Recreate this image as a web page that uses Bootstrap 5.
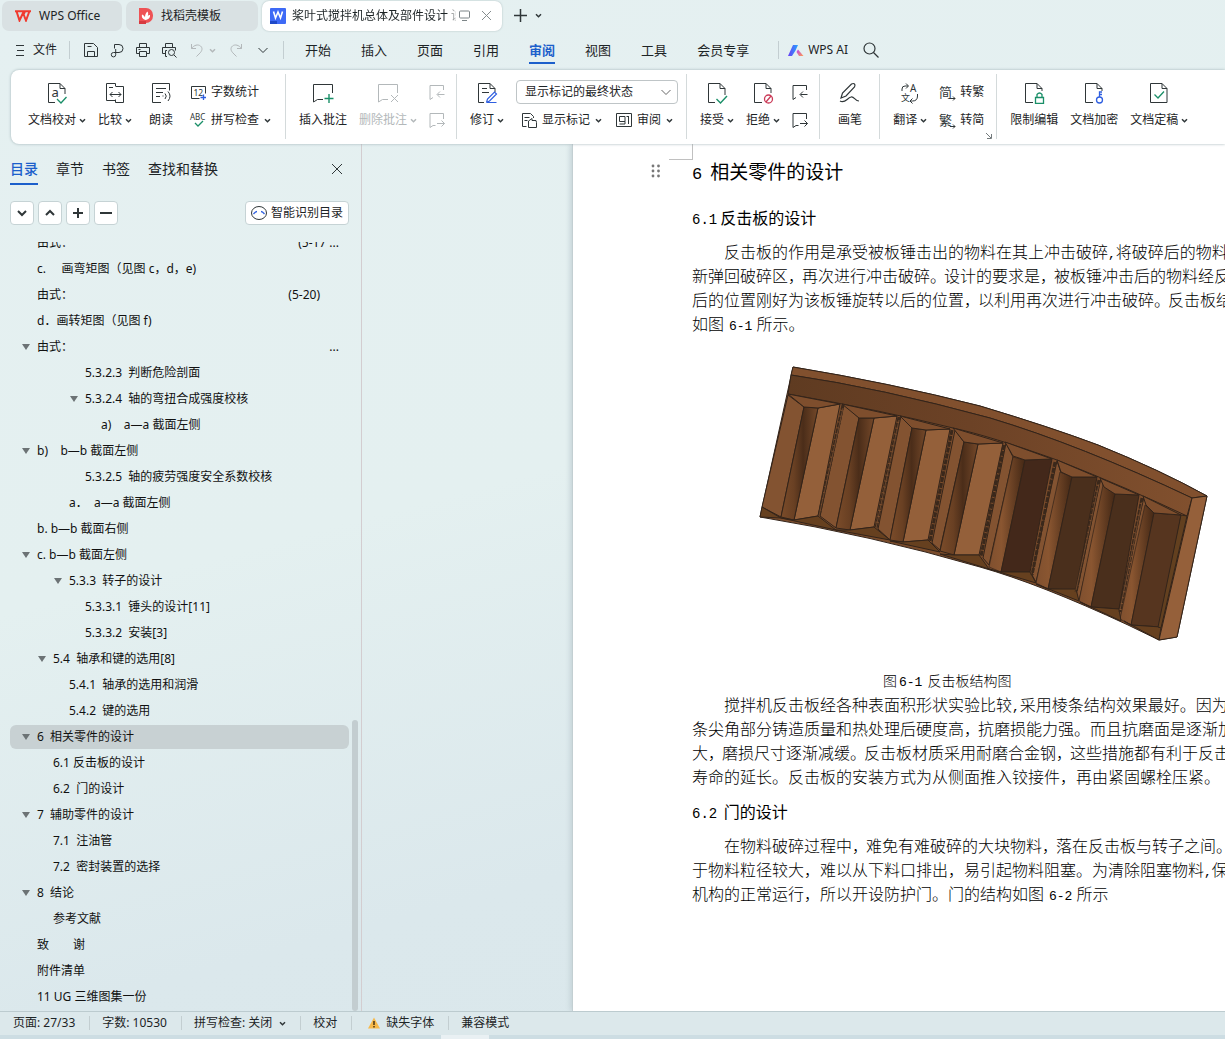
<!DOCTYPE html>
<html lang="zh-CN">
<head>
<meta charset="utf-8">
<meta name="viewport" content="width=device-width, initial-scale=1">
<title>WPS Office</title>
<link href="https://cdn.jsdelivr.net/npm/bootstrap@5.3.0/dist/css/bootstrap.min.css" rel="stylesheet">
<script src="https://cdn.jsdelivr.net/npm/bootstrap@5.3.0/dist/js/bootstrap.bundle.min.js"></script>
<style>
body{font:12px/18px "Noto Sans","Noto Sans CJK SC",sans-serif;color:#1d2426;background:linear-gradient(165deg,#e5f0f1 0%,#e4f0f0 45%,#dbe8ec 75%,#dae7eb 100%);white-space:nowrap}
button{border:0;background:none;padding:0;color:inherit;font:inherit}
a{color:inherit;text-decoration:none}
svg{flex:none;fill:none;stroke:#2f3638;stroke-width:1}
svg text{stroke:none;fill:#2f3638}
.g{stroke:#1a8f68}.b{stroke:#2f5fe0}
.i16{width:16px;height:16px}.i22{width:22px;height:22px}.cv{width:7px;height:7px;stroke-width:1.5}
.off{color:#b3b8ba}.off svg,svg.off{stroke:#b3b8ba}
/* window tabs */
.wtabs{height:33px;padding:0 2px 2px}
.wtab{height:30px;border-radius:7px;background:#d9e1e3}
.t1{width:120px;padding-left:13px}.t2{width:132px;padding-left:13px}.t3{width:240px;padding:0 10px 0 8px}
.wtab.on{background:#fff;box-shadow:0 0 2px #a9b9bc}
.wtitle{width:164px;margin:0 3px 0 6px;-webkit-mask-image:linear-gradient(90deg,#000 156px,transparent 166px)}
/* menu row */
.menu{height:37px;padding:0 15px 3px}
.vr1{width:1px;height:18px;background:#c3ced1}
.mtabs{gap:30px;font-size:13px}
.mtab{height:28px;line-height:28px;border-bottom:2px solid transparent}
.mtab.on{color:#1c5fcb;font-weight:700;border-color:#1c5fcb}
/* ribbon */
.ribbon{margin-left:11px;height:74px;background:#fff;border-radius:8px 0 0 8px;box-shadow:0 0 3px #9fb1b5;padding:4px 0 5px 4px;position:relative;z-index:2}
.grp{gap:12px;padding:8px 12px 0 13px;border-right:1px solid #d4dadb}
.tight{padding-right:11px}.wide{padding-right:14px}
.big{display:flex;flex-direction:column;align-items:center;gap:7px;min-width:34px;height:48px}
.lbl{display:flex;align-items:center;gap:3px}
.col2{display:flex;flex-direction:column;gap:10px;align-items:flex-start;padding-top:1px}
.sm{display:flex;align-items:center;gap:5px;height:18px}
.combo{width:162px;height:24px;font-size:12px;line-height:18px;padding:2px 24px 2px 8px;border-color:#bfc5c7;color:#1d2426;border-radius:4px;margin-top:-3px;background-image:url("data:image/svg+xml,%3csvg xmlns='http://www.w3.org/2000/svg' viewBox='0 0 10 10' fill='none' stroke='%23666'%3e%3cpath d='m.5 3 4.500 4.500L9.500 3'/%3e%3c/svg%3e");background-position:right 6px center;background-size:10px}
/* navigation pane */
.pane{width:362px;border-right:1px solid #d3cdd0}
.ptabs{height:49px;padding:2px 18px 0 10px;gap:18px;font-size:14px}
.ptabs button{height:30px;border-bottom:2px solid transparent}
.ptabs .on{color:#1c5fcb;font-weight:500;border-color:#1c5fcb}
.ptool{padding:8px 12px 0 10px;gap:4px;height:49px}
.sq{width:24px;height:24px;background:#fff;border:1px solid #c6d3d5;border-radius:4px;display:flex;align-items:center;justify-content:center}
.sq svg{stroke-width:2}
.smart{height:24px;background:#fff;border:1px solid #c6d3d5;border-radius:4px;padding:0 5px 0 4px;display:flex;align-items:center;gap:3px}
.tree{padding:0 12px 0 10px;margin:-12px 0 0;list-style:none;font-size:12px;color:#111;display:flex;flex-direction:column}
.tree li{margin:1px 0;height:24px;line-height:24px;border-radius:6px;display:flex;padding:0 10px 0 27px;white-space:pre;position:relative}
.tree li.n2{padding-left:43px}.tree li.n3{padding-left:59px}.tree li.n4{padding-left:75px}.tree li.n5{padding-left:91px}
.tree li.cur{background:#c8d1d3}
.tree .op::before{content:"";border:4px solid transparent;border-top:6px solid #6c7375;border-bottom:0;position:absolute;margin:9px 0 0 -15px}
.eqn{margin-right:19px}
.thumb{width:6px;height:291px;right:3px;bottom:0;border-radius:3px;background:#c3cdd0}
/* document */
.gut{width:210px}
.sheet{background:#fff;border-left:1px solid #c3cfd2;box-shadow:-2px 0 5px #c5d3d7;padding:15px 0 0 119px;position:relative;color:#000;font-family:"Noto Sans CJK SC",sans-serif}
.corner{position:absolute;left:96px;top:0;width:24px;height:16px;border:1px solid #c0c0c0;border-width:0 1px 1px 0}
.grip{position:absolute;left:78px;top:19px;width:10px;height:16px;fill:#777;stroke:none}
.sheet h1{font-size:19px;line-height:24px;margin:0 0 22px;font-weight:400}
.sheet h2{font-size:16px;line-height:24px;margin:11px 0 10px;font-weight:400}
.sheet p{font-size:16px;line-height:24px;margin:0;font-weight:300}
.sheet p.ind{text-indent:32px}
.mn{font-family:"Liberation Mono",monospace;font-size:13px;line-height:1;margin:0 4px 0 5px}
h1 .mn{font-size:17px;margin:0 8px 0 0}
h2 .mn{margin:0 3px 0 0;font-size:14px}
.pz{margin-right:-2px}
.sheet figure{margin:0}
.sheet figure svg{display:block}
.sheet figcaption{font-size:14px;line-height:23px;font-weight:300;padding-left:191px}
figcaption .mn{margin:0 5px 0 2px}
/* status bar */
.status{height:24px;border-top:1px solid #bccbcf;padding:0 13px 1px;background:#dce8eb}
.status .vr1{height:14px;margin:0 12px 0 14px}
.task{height:4px;background:#cddde3;padding-left:441px}
.task div{width:48px;height:4px;background:#e9f0f3}
</style>
</head>
<body class="vh-100 d-flex flex-column overflow-hidden">
<svg width="0" height="0" class="position-absolute">
<defs>
<symbol id="cv" viewBox="0 0 7 7"><path d="M1 2.200 3.500 4.700 6 2.200"/></symbol>
<symbol id="prev" viewBox="0 0 16 16"><path d="M4 13.500 1 15.500V1.500h13.500V6M15.500 10.500h-7M11 7.500 8 10.500 11 13.500"/></symbol>
<symbol id="next" viewBox="0 0 16 16"><path d="M6.500 13.500H4L1 15.500V1.500h13.500V7M8 11.500h7.500M12.500 8.500 15.500 11.500 12.500 14.500"/></symbol>
</defs>
</svg>

<header>
<div class="wtabs d-flex align-items-center gap-1">
  <button class="wtab t1 d-flex align-items-center gap-2"><svg width="16" height="12" viewBox="0 0 16 12" style="stroke:#f03a2e;stroke-width:2"><path d="M0 1.200H10L8 6M1.500 1.200 4.500 10.500 8 3 11 10.500 14.500 1M10.500 1.200H16"/></svg><span>WPS Office</span></button>
  <button class="wtab t2 d-flex align-items-center gap-2"><svg width="14" height="16" viewBox="0 0 14 16"><path d="M0 0h7a7 7 0 0 1 7 7v1a7 7 0 0 1-7 7H0Z" fill="#ee5255" stroke="none"/><path d="M0 13h7v3H0Z" fill="#d73a40" stroke="none"/><path d="M6.500 12C3 11 2.500 8.500 3 6.500c1.500.5 2.500 1.500 3 3C6 7 6.500 5 8.500 3.500 9.500 5 9.300 6.500 8.700 8c.8-.9 1.500-1 2.300-1 .2 2.500-1 4.500-4.500 5Z" fill="#fff" stroke="none"/></svg><span>找稻壳模板</span></button>
  <div class="wtab t3 on d-flex align-items-center"><svg width="16" height="16" viewBox="0 0 16 16"><rect width="16" height="16" rx="1" fill="#3e6af6" stroke="none"/><path d="M0 13h7v3H0Z" fill="#1f49c9" stroke="none"/><path d="M3.500 3.500 5.500 10 8 4l2.500 6 2-6.500" stroke="#fff" stroke-width="1.600"/></svg><span class="wtitle overflow-hidden">桨叶式搅拌机总体及部件设计 说</span><svg width="11" height="11" viewBox="0 0 11 11" style="stroke:#7d8588"><rect x=".5" y="1" width="10" height="7" rx="1"/><path d="M3 10.500h5"/></svg><button class="ms-auto d-flex" aria-label="关闭"><svg width="11" height="11" viewBox="0 0 11 11" style="stroke:#858c8e"><path d="m1 1 9 9M10 1 1 10"/></svg></button></div>
  <button class="d-flex ms-2" aria-label="新建"><svg width="13" height="13" viewBox="0 0 13 13" style="stroke-width:1.500"><path d="M0 6.500h13M6.500 0v13"/></svg></button>
  <button class="d-flex ms-1" aria-label="更多"><svg class="cv"><use href="#cv"/></svg></button>
</div>

<nav class="menu d-flex align-items-center">
  <button class="d-flex align-items-center gap-2"><svg width="10" height="12" viewBox="0 0 10 12"><path d="M1 1.500h8M2 6.500h7M1 11.500h8"/></svg><span>文件</span></button>
  <span class="vr1" style="margin:0 13px 0 12px"></span>
  <div class="d-flex align-items-center" style="gap:10px">
    <button class="d-flex" aria-label="保存"><svg class="i16" viewBox="0 0 16 16"><path d="M1.500 1.500h9l4 4v9h-13ZM4.500 14.500v-5h7v5M4.500 4.500h4"/></svg></button>
    <button class="d-flex" aria-label="输出为PDF"><svg class="i16" viewBox="0 0 16 16"><path d="M5.500 6.500V2.500H10a3.500 3.500 0 0 1 0 8H4.500a2.200 2.200 0 1 0 2.200 2.200V7"/></svg></button>
    <button class="d-flex" aria-label="打印"><svg class="i16" viewBox="0 0 16 16"><path d="M4.500 5V1.500h7V5M4.500 11.500h-3v-6h13v6h-3M4.500 9.500h7v5h-7ZM3.500 7.500h2"/></svg></button>
    <button class="d-flex" aria-label="打印预览"><svg class="i16" viewBox="0 0 16 16"><path d="M4.500 5V1.500h7V5M4.500 11.500h-3v-6h13v3M6 14.500H4.500v-6H6"/><circle cx="10.500" cy="10.500" r="3"/><path d="m13 13 2.500 2.500"/></svg></button>
  </div>
  <div class="d-flex align-items-center off gap-1" style="margin-left:12px"><button class="d-flex" aria-label="撤销"><svg class="i16" viewBox="0 0 16 16"><path d="M2.500 2v4.500H7M2.500 6.500C5 3 9 2 11.500 4S13 9 11 11L7.500 14.500"/></svg></button><svg class="cv"><use href="#cv"/></svg>
  <button class="d-flex ms-2" aria-label="恢复"><svg class="i16" viewBox="0 0 16 16"><path d="M13.500 2v4.500H9M13.500 6.500C11 3 7 2 4.500 4S3 9 5 11l3.500 3.500"/></svg></button></div>
  <button class="d-flex" style="margin-left:14px" aria-label="更多命令"><svg width="10" height="10" viewBox="0 0 10 10"><path d="m.5 3 4.500 4.500L9.500 3"/></svg></button>
  <span class="vr1" style="margin:0 21px 0 15px"></span>
  <div class="mtabs d-flex">
    <a class="mtab" href="#">开始</a><a class="mtab" href="#">插入</a><a class="mtab" href="#">页面</a><a class="mtab" href="#">引用</a><a class="mtab on" href="#">审阅</a><a class="mtab" href="#">视图</a><a class="mtab" href="#">工具</a><a class="mtab" href="#">会员专享</a>
  </div>
  <span class="vr1" style="margin:0 9px 0 29px"></span>
  <button class="d-flex align-items-center gap-1"><svg width="16" height="13" viewBox="0 0 16 13"><defs><linearGradient id="ai" x2="1"><stop stop-color="#6a3df5"/><stop offset="1" stop-color="#24a5ff"/></linearGradient><linearGradient id="ai2" x2="1" y2="1"><stop stop-color="#b93df5"/><stop offset="1" stop-color="#ffa04d"/></linearGradient></defs><path d="M0 12 5 1h5L7.500 6.500 4 12Z" fill="url(#ai)" stroke="none"/><path d="M10 5.500 15.500 12H11L8.500 8Z" fill="url(#ai2)" stroke="none"/></svg><span>WPS AI</span></button>
  <button class="d-flex" style="margin-left:15px" aria-label="搜索"><svg class="i16" viewBox="0 0 16 16" style="stroke-width:1.200"><circle cx="6.500" cy="6.500" r="5.500"/><path d="m10.500 10.500 5 5"/></svg></button>
</nav>
</header>

<section class="ribbon d-flex">
  <div class="grp wide d-flex">
    <button class="big"><svg class="i22" viewBox="0 0 22 22"><path d="M9 20.500H2.500v-19H14l5 5V12M14 1.500v5h5"/><text x="5.500" y="15" font-size="13">a</text><path class="g" d="m11 17 4 4 5.500-6" stroke-width="1.300"/></svg><span class="lbl">文档校对<svg class="cv"><use href="#cv"/></svg></span></button>
    <button class="big"><svg class="i22" viewBox="0 0 22 22"><path d="M11.500 4V1.500h-9v17h9M11.500 4.500h8v16h-8v-3M5 5.500h4M6 12.500h11M8.500 10 6 12.500 8.500 15M14.500 10l2.500 2.500-2.500 2.500"/></svg><span class="lbl">比较<svg class="cv"><use href="#cv"/></svg></span></button>
    <button class="big"><svg class="i22" viewBox="0 0 22 22"><path d="M11 20.500H2.500v-19h17v7M6 6.500h10M6 10.500h7M6 14.500h4"/><path d="M13 13.500v1M15 11.500q2.500 2.500 0 5.500M18 9.500q4 4.500 0 9.500"/></svg><span class="lbl">朗读</span></button>
    <div class="col2">
      <button class="sm"><svg class="i16" viewBox="0 0 16 16"><path d="M9.500 14.500h-8v-12h14v7"/><text x="3.500" y="12" font-size="8.500">12</text><path class="b" d="M13.500 10.500v6M10.500 13.500h6" stroke-width="1.300"/></svg>字数统计</button>
      <button class="sm"><svg class="i16" viewBox="0 0 16 16" overflow="visible"><text x="0" y="8" font-size="8">ABC</text><path class="g" d="m5 11 3 3 5-5" stroke-width="1.300"/></svg>拼写检查<svg class="cv"><use href="#cv"/></svg></button>
    </div>
  </div>
  <div class="grp tight d-flex">
    <button class="big"><svg class="i22" viewBox="0 0 22 22"><path d="M11 17.500H5.500L1.500 20V2.500h19V11"/><path class="g" d="M17 12v9M12.500 16.500h9" stroke-width="1.400"/></svg><span class="lbl">插入批注</span></button>
    <button class="big off" disabled><svg class="i22" viewBox="0 0 22 22"><path d="M11 17.500H5.500L1.500 20V2.500h19V11M14 13l7 7M21 13l-7 7"/></svg><span class="lbl">删除批注<svg class="cv"><use href="#cv"/></svg></span></button>
    <div class="col2 off">
      <button class="sm" aria-label="上一条批注" disabled><svg class="i16"><use href="#prev"/></svg></button>
      <button class="sm" aria-label="下一条批注" disabled><svg class="i16"><use href="#next"/></svg></button>
    </div>
  </div>
  <div class="grp d-flex" style="padding-right:8px">
    <button class="big"><svg class="i22" viewBox="0 0 22 22"><path d="M8 20.500H2.500v-19H14l5 5V10M14 1.500v5h5M6 6.500h5M6 10.500h7"/><path class="b" d="m10.500 20.500 1-3.500 7-7 2 2-7 7-3 1.500h10" stroke-width="1.200"/></svg><span class="lbl">修订<svg class="cv"><use href="#cv"/></svg></span></button>
    <div class="col2" style="gap:7px">
      <select class="form-select combo" aria-label="标记显示方式"><option>显示标记的最终状态</option></select>
      <div class="d-flex" style="gap:14px;padding-left:5px">
        <button class="sm"><svg class="i16" viewBox="0 0 16 16"><path d="M5.500 14.500h-4v-13h8l3 3V6M3.500 5.500h5M3.500 8.500h3M15 8.500h-4v-2L7.500 9v6.500h8v-5Z"/></svg>显示标记<svg class="cv"><use href="#cv"/></svg></button>
        <button class="sm"><svg class="i16" viewBox="0 0 16 16"><path d="M.5 1.500h15v13H.5ZM3.500 4.500H9v5H3.500ZM9 9.500V12H3.500M12.500 4v8M10.500 4.500h2"/></svg>审阅<svg class="cv"><use href="#cv"/></svg></button>
      </div>
    </div>
  </div>
  <div class="grp tight d-flex">
    <button class="big"><svg class="i22" viewBox="0 0 22 22"><path d="M9 20.500H2.500v-19H14l5 5V13M14 1.500v5h5"/><path class="g" d="m10.500 17 4 4L21 14" stroke-width="1.400"/></svg><span class="lbl">接受<svg class="cv"><use href="#cv"/></svg></span></button>
    <button class="big"><svg class="i22" viewBox="0 0 22 22"><path d="M10 20.500H2.500v-19H14l5 5V11M14 1.500v5h5"/><g style="stroke:#cb3b58;stroke-width:1.300"><circle cx="16.500" cy="17" r="4"/><path d="m14 20 5-6"/></g></svg><span class="lbl">拒绝<svg class="cv"><use href="#cv"/></svg></span></button>
    <div class="col2">
      <button class="sm" aria-label="上一处修订"><svg class="i16"><use href="#prev"/></svg></button>
      <button class="sm" aria-label="下一处修订"><svg class="i16"><use href="#next"/></svg></button>
    </div>
  </div>
  <div class="grp d-flex">
    <button class="big"><svg class="i22" viewBox="0 0 22 22"><path d="m2 16 1.500-5L12.500 2q2-1 3 0t0 3L7 14l-5 2ZM1 19c5 3 7-3 11-4 3-1 4 4 8 4" stroke-width="1.200"/></svg><span class="lbl">画笔</span></button>
  </div>
  <div class="grp d-flex position-relative">
    <button class="big"><svg class="i22" viewBox="0 0 22 22"><path d="M3 9V7q0-3 3-3h3M7 1.500 9.500 4 7 6.500M18.500 12v2q0 5-5 5H11M13.500 16.500 11 19l2.500 2.500"/><text x="11" y="10" font-size="10">A</text><text x="2" y="19" font-size="9">文</text></svg><span class="lbl">翻译<svg class="cv"><use href="#cv"/></svg></span></button>
    <div class="col2">
      <button class="sm"><svg class="i16" viewBox="0 0 16 16" overflow="visible"><text x="0" y="13" font-size="13">简</text><path d="M10 14.500h6M14 12.500l2 2-2 2"/></svg>转繁</button>
      <button class="sm"><svg class="i16" viewBox="0 0 16 16" overflow="visible"><text x="0" y="13" font-size="13">繁</text><path d="M11 14.500h5M14 12.500l2 2-2 2"/></svg>转简</button>
    </div>
    <svg class="position-absolute" style="right:4px;bottom:0;stroke:#737a7c" width="6" height="6" viewBox="0 0 6 6"><path d="m0 0 5 5M5.500 1v4.500H1"/></svg>
  </div>
  <div class="grp d-flex border-0">
    <button class="big"><svg class="i22" viewBox="0 0 22 22"><path d="M10 20.500H2.500v-19H14l5 5V9M14 1.500v5h5"/><path class="g" d="M12.500 15.500h8v6h-8ZM14 15v-2.500q2.500-3 5 0V15" stroke-width="1.300"/></svg><span class="lbl">限制编辑</span></button>
    <button class="big"><svg class="i22" viewBox="0 0 22 22"><path d="M10 20.500H2.500v-19H14l5 5V9M14 1.500v5h5"/><g class="b" stroke-width="1.300"><circle cx="16.500" cy="18" r="3"/><path d="M16.500 15v-5H19M16.500 12.500H19"/></g></svg><span class="lbl">文档加密</span></button>
    <button class="big"><svg class="i22" viewBox="0 0 22 22"><path d="M2.500 1.500H14l5 5v14H2.500ZM14 1.500v5h5"/><path class="g" d="m6.500 12.500 3.500 3.500 6-6.500" stroke-width="1.300"/></svg><span class="lbl">文档定稿<svg class="cv"><use href="#cv"/></svg></span></button>
  </div>
</section>

<main class="flex-grow-1 d-flex overflow-hidden" style="min-height:0">
<aside class="pane d-flex flex-column flex-shrink-0 position-relative">
  <div class="ptabs d-flex align-items-center"><button class="on">目录</button><button>章节</button><button>书签</button><button>查找和替换</button><button class="ms-auto d-flex align-items-center" aria-label="关闭"><svg width="12" height="12" viewBox="0 0 12 12"><path d="m1 1 10 10M11 1 1 11"/></svg></button></div>
  <div class="ptool d-flex">
    <button class="sq" aria-label="展开"><svg width="10" height="10" viewBox="0 0 10 10"><path d="m1 3 4 4 4-4"/></svg></button>
    <button class="sq" aria-label="收起"><svg width="10" height="10" viewBox="0 0 10 10"><path d="m1 7 4-4 4 4"/></svg></button>
    <button class="sq" aria-label="增加"><svg width="10" height="10" viewBox="0 0 10 10"><path d="M0 5h10M5 0v10"/></svg></button>
    <button class="sq" aria-label="减少"><svg width="12" height="10" viewBox="0 0 12 10"><path d="M0 5h12"/></svg></button>
    <button class="smart ms-auto"><svg width="18" height="16" viewBox="0 0 18 16"><ellipse cx="9" cy="8" rx="7.500" ry="6.500"/><path class="b" d="M3.500 9q2-2.500 3.500-2.500M14.500 9q-2-2.500-3.500-2.500" stroke-width="1.300"/></svg>智能识别目录</button>
  </div>
  <div class="flex-grow-1 overflow-hidden" style="min-height:0">
  <ul class="tree">
    <li>由式：<span class="ms-auto">(5-17 ...</span></li>
    <li>c.     画弯矩图（见图 c，d，e)</li>
    <li>由式：<span class="ms-auto eqn">(5-20)</span></li>
    <li>d．画转矩图（见图 f)</li>
    <li class="op">由式：<span class="ms-auto">...</span></li>
    <li class="n4">5.3.2.3  判断危险剖面</li>
    <li class="n4 op">5.3.2.4  轴的弯扭合成强度校核</li>
    <li class="n5">a)    a—a 截面左侧</li>
    <li class="op">b)    b—b 截面左侧</li>
    <li class="n4">5.3.2.5  轴的疲劳强度安全系数校核</li>
    <li class="n3">a．  a—a 截面左侧</li>
    <li>b. b—b 截面右侧</li>
    <li class="op">c. b—b 截面左侧</li>
    <li class="n3 op">5.3.3  转子的设计</li>
    <li class="n4">5.3.3.1  锤头的设计[11]</li>
    <li class="n4">5.3.3.2  安装[3]</li>
    <li class="n2 op">5.4  轴承和键的选用[8]</li>
    <li class="n3">5.4.1  轴承的选用和润滑</li>
    <li class="n3">5.4.2  键的选用</li>
    <li class="op cur">6  相关零件的设计</li>
    <li class="n2">6.1 反击板的设计</li>
    <li class="n2">6.2  门的设计</li>
    <li class="op">7  辅助零件的设计</li>
    <li class="n2">7.1  注油管</li>
    <li class="n2">7.2  密封装置的选择</li>
    <li class="op">8  结论</li>
    <li class="n2">参考文献</li>
    <li>致　　谢</li>
    <li>附件清单</li>
    <li>11 UG 三维图集一份</li>
  </ul>
  </div>
  <div class="thumb position-absolute"></div>
</aside>
<div class="gut flex-shrink-0"></div>
<article class="sheet flex-grow-1 overflow-hidden" style="min-width:0">
  <div class="corner"></div>
  <svg class="grip" viewBox="0 0 10 16"><circle cx="2" cy="3" r="1.400"/><circle cx="7.500" cy="3" r="1.400"/><circle cx="2" cy="8" r="1.400"/><circle cx="7.500" cy="8" r="1.400"/><circle cx="2" cy="13" r="1.400"/><circle cx="7.500" cy="13" r="1.400"/></svg>
  <h1><span class="mn">6</span>相关零件的设计</h1>
  <h2><span class="mn">6.1</span>反击板的设计</h2>
  <p class="ind">反击板的作用是承受被板锤击出的物料在其上冲击破碎<span class="mn m-0">,</span>将破碎后的物料<br>新弹回破碎区<span class="pz">，</span>再次进行冲击破碎<span class="pz">。</span>设计的要求是<span class="pz">，</span>被板锤冲击后的物料经反<br>后的位置刚好为该板锤旋转以后的位置<span class="pz">，</span>以利用再次进行冲击破碎<span class="pz">。</span>反击板结<br>如图<span class="mn">6-1</span>所示。</p>
  <figure>
  <svg width="556" height="334" viewBox="692 335 556 334" role="img" aria-label="反击板" style="stroke:#33241a;stroke-width:1;stroke-linejoin:round">
    <defs>
      <linearGradient id="cyA"><stop stop-color="#7b4c2a"/><stop offset=".35" stop-color="#694023"/><stop offset=".6" stop-color="#4b2d19"/><stop offset="1" stop-color="#744829"/></linearGradient>
      <linearGradient id="cyB"><stop stop-color="#80502f"/><stop offset=".35" stop-color="#8a5631"/><stop offset="1" stop-color="#442815"/></linearGradient>
      <linearGradient id="band"><stop stop-color="#5f3b21"/><stop offset=".45" stop-color="#6c4226"/><stop offset="1" stop-color="#81502e"/></linearGradient>
    </defs>
    <path fill="#7b4c2b" d="M793 367Q890 383 980 406 1050 427 1098 445 1160 470 1207 496L1177 637 1159 640 1128 625Q1040 584 980 567 870 535 760 517Z"/>
    <path fill="#81502e" d="M793 367Q890 383 980 406 1050 427 1098 445 1160 470 1207 496L1192 498Q1080 445 990 418 880 388 791 375Z"/>
    <path fill="url(#band)" d="M791 375Q880 388 990 418 1080 445 1192 498L1187 516Q1130 489 1057 460 990 436 953 428 880 410 788 394Z"/>
    <g fill="#835331"><path d="m788 395 16 12-23 110-19-10Z"/><path d="m844 404 15 14-23 110-16-12Z"/><path d="m901 416 11 12-22 112-12-11Z"/><path d="m955 430 9 12-24 108-8-7Z"/><path d="m1006 443 7 14-24 108-6-7Z"/><path d="m1057 461 4 12-25 109-4-7Z"/><path d="m1101 478 3 10-25 113-3-6Z"/><path d="m1144 497 3 10-26 112-3-7Z"/></g>
    <g fill="#94603a"><path d="m818 408 22-4-22 112-24 4Z"/><path d="m874 418 23-2-23 111-24 3Z"/><path d="m926 430 24-1-22 111-25 2Z"/><path d="m978 444 25-1-24 112h-25Z"/></g>
    <g fill="url(#cyA)"><path d="m804 407 14 1-24 112-13-3Z"/><path d="m859 418 15 0-24 112-14-2Z"/><path d="m912 428 14 2-23 112-13-2Z"/><path d="m964 442 14 2-24 111-14-4Z"/></g>
    <g fill="url(#cyB)" stroke-width=".7"><path d="m1013 457 12 3-24 112-12-5Z"/><path d="m1060 472 12 5-24 112-12-6Z"/><path d="m1103 485 12 9-24 113-12-6Z"/><path d="m1145 505 9 8-23 112-11-6Z"/></g>
    <path fill="#43281a" d="m1025 460 27-1-22 113h-29Z"/>
    <path fill="#4a2f1c" d="M1072 477h25l-21 113-28-1ZM1115 494l24 1-20 114-28-2Z"/>
    <path fill="#56351f" d="m1154 513 27 2-20 112-30-2Z"/>
    <g fill="#7e4e2d"><path d="m788 394 16 13 14 1 22-4ZM842 404l17 14h15l23-2ZM900 416l12 12 14 2 24-1ZM953 428l11 14 14 2 25-1ZM1005 442l8 14 12 4 27-1ZM1057 460l4 12 11 5 25 0ZM1100 478l4 9 11 7 24 1ZM1143 496l3 9 8 8 27 2Z"/></g>
    <g fill="#66401f"><path d="m762 507 19 11-21-1ZM781 518l13 2 24-4 18 14ZM836 530l14 0 24-3 16 13ZM890 541l13 1 25-2 12 12ZM940 554l14 1h25l10 14ZM989 569l12 3h29l6 11ZM1036 584l12 5h28l3 12ZM1080 602l11 5 28 2 2 12ZM1124 621l7 4 30 2-2 13Z"/></g>
    <g style="stroke:#3a281b;stroke-width:3;stroke-dasharray:5 1"><path d="m843 405-24 111M899 417l-23 111M952 430l-22 111M1004 445l-23 111M1055 462l-23 113M1099 480l-23 112M1142 498l-22 114"/></g>
    <g style="stroke:#805334;stroke-width:.7"><path d="m843 408-24 108M899 420l-23 108M1099 484l-23 106M1142 502l-22 108"/></g>
    <path fill="#63401f" d="m1181 515 6 1-26 112-3-1Z"/>
    <path fill="#95603a" d="m1192 498 15-2-30 141-18 3Z"/>
  </svg>
  <figcaption>图<span class="mn">6-1</span>反击板结构图</figcaption>
  </figure>
  <p class="ind">搅拌机反击板经各种表面积形状实验比较<span class="mn m-0">,</span>采用棱条结构效果最好。因为棱<br>条尖角部分铸造质量和热处理后硬度高<span class="pz">，</span>抗磨损能力强。而且抗磨面是逐渐加<br>大<span class="pz">，</span>磨损尺寸逐渐减缓<span class="pz">。</span>反击板材质采用耐磨合金钢<span class="pz">，</span>这些措施都有利于反击<br>寿命的延长。反击板的安装方式为从侧面推入铰接件，再由紧固螺栓压紧。</p>
  <h2><span class="mn">6.2</span> 门的设计</h2>
  <p class="ind">在物料破碎过程中<span class="pz">，</span>难免有难破碎的大块物料<span class="pz">，</span>落在反击板与转子之间。<br>于物料粒径较大，难以从下料口排出，易引起物料阻塞。为清除阻塞物料<span class="mn m-0">,</span>保<br>机构的正常运行，所以开设防护门。门的结构如图<span class="mn">6-2</span>所示</p>
</article>
</main>

<footer>
  <div class="status d-flex align-items-center">
    <span>页面: 27/33</span><span class="vr1"></span>
    <span>字数: 10530</span><span class="vr1"></span>
    <button class="lbl" style="gap:7px">拼写检查: 关闭<svg class="cv"><use href="#cv"/></svg></button><span class="vr1"></span>
    <span>校对</span><span class="vr1"></span>
    <span class="lbl ps-1" style="gap:6px"><svg width="12" height="12" viewBox="0 0 12 12"><path d="M6 .5 12 11.500H0Z" fill="#f7b94a" stroke="none"/><path d="M6 4v4M6 9v1.500" stroke="#3c2c10" stroke-width="1.400"/></svg>缺失字体</span><span class="vr1"></span>
    <span>兼容模式</span>
  </div>
  <div class="task"><div></div></div>
</footer>
</body>
</html>
